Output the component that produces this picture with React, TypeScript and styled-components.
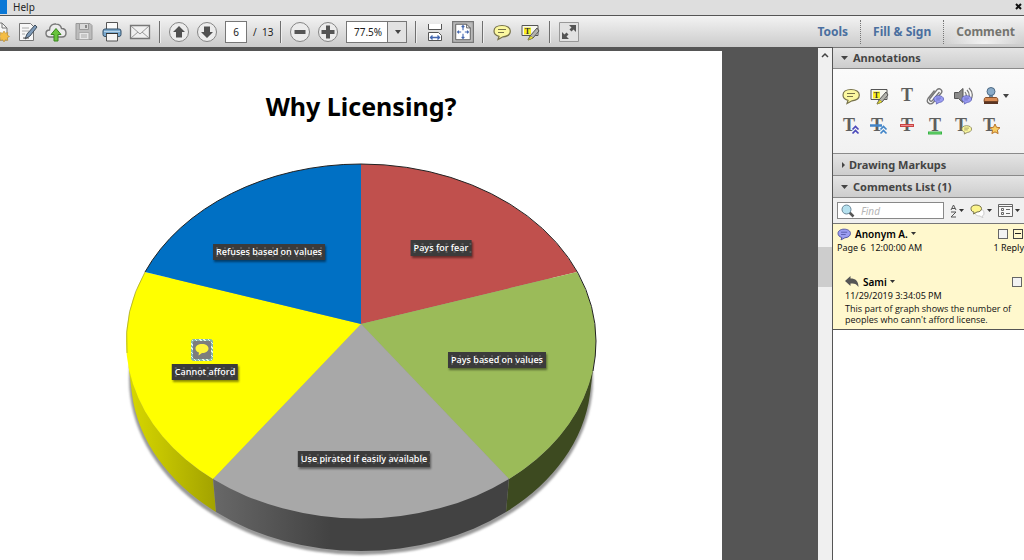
import React from "react";
import styled, { createGlobalStyle, css } from "styled-components";

const GlobalStyle = createGlobalStyle`
  * { box-sizing: border-box; }
  body { margin: 0; background: #fff; }
  body, button, input, select {
    font-family: "Noto Sans", "Open Sans", sans-serif;
    color: #222;
  }
  button { border: 0; background: none; padding: 0; margin: 0; }
  svg { display: block; flex: none; }
  h1, h2, p { margin: 0; }
`;

const Shell = styled.div`
  display: flex;
  flex-direction: column;
  min-height: 100vh;
  overflow: hidden;
`;

const MenuBar = styled.nav`
  display: flex;
  align-items: center;
  height: 16px;
  background: #dedede;
  border-bottom: 1px solid #555;
`;

const MenuHighlight = styled.span`
  align-self: stretch;
  width: 7px;
  margin-bottom: 1px;
  background: #0a78d6;
`;

const MenuItem = styled.button`
  margin-left: 6px;
  padding-bottom: 2px;
  font-size: 10px;
  line-height: 12px;
`;

const CloseButton = styled.button`
  margin-left: auto;
  padding: 0 2px 2px 0;
`;

const Toolbar = styled.header`
  display: flex;
  align-items: stretch;
  height: 31px;
  background: linear-gradient(#f3f3f3, #cbcbcb);
`;

const Tools = styled.div`
  display: flex;
  align-items: center;
  flex: 1;
  margin-left: -14px;
`;

const ToolButton = styled.button<{ $active?: boolean }>`
  display: flex;
  align-items: center;
  justify-content: center;
  width: 28px;
  height: 30px;
  ${(p) =>
    p.$active &&
    css`
      width: 22px;
      height: 22px;
      margin: 0 3px;
      background: #bdbdbd;
      border: 1px solid #777;
      box-shadow: inset 0 0 2px #777;
    `}
`;

const Divider = styled.span`
  width: 1px;
  height: 22px;
  margin: 0 5px;
  background: #6f6f6f;
  box-shadow: 1px 0 #eee;
`;

const PageField = styled.input`
  width: 22px;
  height: 22px;
  margin-left: 4px;
  padding: 0;
  border: 1px solid #777;
  background: #fff;
  font-size: 10px;
  text-align: center;
`;

const PageTotal = styled.span`
  width: 28px;
  padding-left: 6px;
  font-size: 10px;
  line-height: 16px;
  white-space: pre;
`;

const ZoomBox = styled.label`
  position: relative;
  width: 61px;
  height: 22px;
  margin: 0 3px 0 4px;
`;

const ZoomSelect = styled.select`
  display: block;
  appearance: none;
  width: 100%;
  height: 100%;
  padding: 0 0 0 7px;
  border: 1px solid #777;
  border-radius: 0;
  background: linear-gradient(90deg, #fff 40px, #777 40px, #777 41px, #e2e2e2 41px);
  font-size: 10px;
  line-height: 20px;
`;

const ZoomArrow = styled.svg`
  position: absolute;
  right: 6px;
  top: 9px;
  pointer-events: none;
`;

const TaskTabs = styled.div`
  display: flex;
  align-items: center;
`;

const TaskTab = styled.button<{ $active?: boolean }>`
  height: 24px;
  padding: 0 12px;
  font-size: 12px;
  font-weight: 700;
  line-height: 24px;
  color: ${(p) => (p.$active ? "#74746f" : "#4a6f9f")};
  background: ${(p) => (p.$active ? "radial-gradient(ellipse at 50% 100%, #f2f2f2, transparent 70%)" : "none")};
  & + & {
    border-left: 1px dotted #777;
  }
  &:last-child {
    padding-right: 9px;
  }
`;

const Workspace = styled.div`
  display: flex;
  flex: 1;
`;

const Viewer = styled.main`
  display: flex;
  flex: 1;
  min-width: 0;
  padding: 4px 96px 0 0;
  background: #555;
`;

const Page = styled.article`
  display: flex;
  flex: 1;
  min-width: 0;
  flex-direction: column;
  align-items: center;
  padding-top: 36px;
  background: #fff;
`;

const PageTitle = styled.h1`
  font-size: 25px;
  line-height: 38px;
  font-weight: 700;
  color: #000;
`;

const Chart = styled.figure`
  position: relative;
  width: 480px;
  height: 400px;
  margin: 33px 0 0;
`;

const SliceLabel = styled.span<{ $x: number; $y: number }>`
  position: absolute;
  left: ${(p) => p.$x}px;
  top: ${(p) => p.$y}px;
  transform: translate(-50%, -50%);
  padding: 0 3px;
  font-family: "Open Sans", "Noto Sans", sans-serif;
  font-size: 9px;
  font-weight: 600;
  line-height: 16px;
  white-space: nowrap;
  color: #fff;
  background: radial-gradient(#5a5a5a 1px, transparent 1px) 0 0 / 8px 8px, #3b3b3b;
  box-shadow: 1px 2px 2px rgba(0, 0, 0, 0.45);
`;

const NoteMarker = styled.button`
  position: absolute;
  left: 70px;
  top: 181px;
  display: flex;
  align-items: center;
  justify-content: center;
  width: 22px;
  height: 22px;
  border: 2px solid transparent;
  border-radius: 3px;
  background: linear-gradient(#7d7d7d, #7d7d7d) padding-box,
    repeating-linear-gradient(45deg, #e4f6e6 0 1px, #86b5b0 1px 3px) border-box;
`;

const ScrollTrack = styled.div`
  width: 15px;
  background: #f0f0f0;
  border-top: 1px solid #555;
  border-right: 1px solid #555;
  padding-top: 4px;
`;

const ScrollThumb = styled.div`
  height: 40px;
  margin-top: 188px;
  background: #cdcdcd;
`;

const Panel = styled.aside`
  display: flex;
  flex-direction: column;
  width: 191px;
  background: #fff;
`;

const SectionHeader = styled.button<{ $open?: boolean }>`
  display: flex;
  align-items: center;
  gap: ${(p) => (p.$open ? 5 : 2)}px;
  height: 22px;
  padding-left: ${(p) => (p.$open ? 8 : 7)}px;
  font-size: 11px;
  font-weight: 700;
  line-height: 20px;
  text-align: left;
  color: #444;
  background: linear-gradient(#e4e4e4, #cdcdcd);
  border-bottom: 1px solid #8a8a8a;
  &:first-child {
    border-top: 1px solid #777;
  }
`;

const AnnotationTools = styled.div`
  display: grid;
  grid-template-columns: repeat(6, 28px);
  grid-auto-rows: 30px;
  height: 85px;
  padding: 12px 0 0 4px;
  background: linear-gradient(#fbfbfb, #f1f1f1);
  border-bottom: 1px solid #8a8a8a;
`;

const StampButton = styled(ToolButton)`
  justify-content: flex-start;
  width: 40px;
  gap: 1px;
  padding-left: 3px;
`;

const FilterRow = styled.div`
  display: flex;
  align-items: center;
  gap: 6px;
  height: 26px;
  padding-left: 4px;
  background: #f0f0f0;
  border-bottom: 1px solid #777;
`;

const SearchBox = styled.label`
  display: flex;
  align-items: center;
  gap: 6px;
  width: 107px;
  height: 17px;
  padding-left: 3px;
  border: 1px solid #888;
  background: #fff;
`;

const SearchInput = styled.input`
  width: 70px;
  height: 15px;
  padding: 0;
  border: 0;
  background: none;
  font-size: 10px;
  &::placeholder {
    color: #b5b5b5;
    font-style: italic;
  }
`;

const FilterButton = styled.button`
  display: flex;
  align-items: center;
  gap: 2px;
`;

const Thread = styled.section`
  display: flex;
  flex-direction: column;
  height: 106px;
  padding-top: 2px;
  background: #fff8cd;
  border-bottom: 1px solid #555;
  font-size: 10px;
  line-height: 14px;
  color: #111;
`;

const ThreadRow = styled.div`
  display: flex;
  align-items: center;
  gap: 4px;
  height: 15px;
  padding: 0 1px 0 4px;
`;

const Author = styled.button`
  display: flex;
  align-items: center;
  gap: 3px;
  margin-right: auto;
  font-size: 10px;
  font-weight: 600;
  line-height: 14px;
  color: #000;
`;

const Check = styled.input`
  appearance: none;
  width: 10px;
  height: 10px;
  margin: 0 1px;
  border: 1px solid #666;
  background: #f3f3f3;
`;

const CollapseButton = styled.button`
  display: flex;
  align-items: center;
  justify-content: center;
  width: 10px;
  height: 10px;
  border: 1px solid #444;
`;

const Meta = styled.div`
  display: flex;
  justify-content: space-between;
  padding-left: 4px;
  font-size: 9px;
  white-space: pre;
`;

const Reply = styled.div`
  margin-top: 19px;
  padding-left: 8px;
`;

const ReplyText = styled.p`
  padding-left: 4px;
  font-family: "Open Sans", "Noto Sans", sans-serif;
  font-size: 9px;
  line-height: 11px;
`;

const Arrow = ({ right = false }: { right?: boolean }) => (
  <svg width="7" height="6" viewBox="0 0 7 6" fill="#444">
    {right ? <path d="M2 0l3 3-3 3z" /> : <path d="M0 1h7L3.500 5z" />}
  </svg>
);

const MiniArrow = () => (
  <svg width="5" height="4" viewBox="0 0 5 4" fill="#333">
    <path d="M0 0h5L2.500 3z" />
  </svg>
);

const Icon = ({ children, size = 22 }: { children: React.ReactNode; size?: number }) => (
  <svg width={size} height={size} viewBox="0 0 22 22" fill="none" aria-hidden="true">
    {children}
  </svg>
);

const Bubble = ({ fill = "#fbf8a0", stroke = "#77724a" }: { fill?: string; stroke?: string }) => (
  <>
    <path
      d="M11 4.500c-5 0-8 2.400-8 5.600 0 2.500 2 4.600 5 5.300L7 18.500l5-2.700c4.500-.3 7.300-2.700 7.300-5.700C19.300 6.900 16 4.500 11 4.500z"
      fill={fill}
      stroke={stroke}
      strokeWidth="1.200"
    />
    <path d="M7 8.500h8M7 11.500h6" stroke={stroke} />
  </>
);

const HighlightArt = () => (
  <>
    <path d="M3 4.500h16v10H3z" fill="#f6f6ee" stroke="#555" />
    <path d="M5 6.500h7v7H5z" fill="#fbf01c" />
    <text x="8.500" y="13" textAnchor="middle" fontFamily="Liberation Serif" fontSize="8" fontWeight="700" fill="#333">T</text>
    <path d="M18 7l-7 8-2 4 5-2 6-7z" fill="#b3b3ad" stroke="#555" />
    <path d="M12 15l2 2-5 2z" fill="#f8ee2b" stroke="#99933a" strokeWidth=".7" />
  </>
);

const LetterT = ({ x = 11 }: { x?: number }) => (
  <text x={x} y="16" textAnchor="middle" fontFamily="Liberation Serif" fontSize="18" fontWeight="700" fill="#5e5e5e">T</text>
);

const MiniBubble = ({ fill, stroke }: { fill: string; stroke: string }) => (
  <g transform="translate(8 8) scale(.6)">
    <Bubble fill={fill} stroke={stroke} />
  </g>
);

const Carets = ({ color }: { color: string }) => (
  <path d="M12.500 14.500l3-3 3 3M12.500 18.500l3-3 3 3" stroke={color} strokeWidth="1.700" />
);

const RoundArt = ({ children }: { children: React.ReactNode }) => (
  <>
    <circle cx="11" cy="11" r="9.500" fill="#ececec" stroke="#858585" />
    {children}
  </>
);

const slices = [
  { d: "M0-17V-177A235 177 0 0 1 216-69Z", fill: "#c0504d" },
  { d: "M0-17L216-69A235 177 0 0 1 148 138Z", fill: "#9bbb59" },
  { d: "M0-17L148 138A235 177 0 0 1-148 138Z", fill: "#a8a8a8" },
  { d: "M0-17L-148 138A235 177 0 0 1-216-69Z", fill: "#ffff00" },
  { d: "M0-17L-216-69A235 177 0 0 1 0-177Z", fill: "#0070c4" },
];

const sliceLabels = [
  { text: "Refuses based on values", x: 148, y: 94 },
  { text: "Pays for fear", x: 320, y: 90 },
  { text: "Pays based on values", x: 376, y: 202 },
  { text: "Use pirated if easily available", x: 243, y: 301 },
  { text: "Cannot afford", x: 84, y: 214 },
];

const PieChart = () => (
  <Chart>
    <svg width="480" height="400" viewBox="-240 -183 480 400" role="img" aria-label="Licensing attitudes">
      <defs>
        <filter id="soft" x="-10%" y="-10%" width="120%" height="120%">
          <feGaussianBlur stdDeviation="1.200" />
        </filter>
        <linearGradient id="olive" x1="0" x2="1">
          <stop offset="0" stopColor="#d8d800" />
          <stop offset=".4" stopColor="#c4c400" />
          <stop offset="1" stopColor="#a2a200" />
        </linearGradient>
        <linearGradient id="coal" x1="0" x2="1">
          <stop offset="0" stopColor="#686868" />
          <stop offset=".4" stopColor="#424242" />
          <stop offset="1" stopColor="#424242" />
        </linearGradient>
      </defs>
      <ellipse cx="0" cy="38" rx="232" ry="176" fill="#999" filter="url(#soft)" />
      <path d="M-234 12L-229 53A230 174 0 0 0-145 171L-148 138A235 177 0 0 1-234 12Z" fill="url(#olive)" />
      <path d="M-148 137L-145 171A230 174 0 0 0 145 171L148 137Z" fill="url(#coal)" />
      <path d="M234 12L229 53A230 174 0 0 1 145 171L148 138A235 177 0 0 0 234 12Z" fill="#3d4a20" />
      {slices.map((s) => (
        <path key={s.fill} d={s.d} fill={s.fill} />
      ))}
      <path d="M-216-69A235 177 0 0 1 0-177A235 177 0 0 1 235 0Q235 15 232 30" fill="none" stroke="#222" />
      <path d="M-216-69A235 177 0 0 0-234 12" fill="none" stroke="#99993a" strokeWidth=".7" />
    </svg>
    {sliceLabels.map((l) => (
      <SliceLabel key={l.text} $x={l.x} $y={l.y}>
        {l.text}
      </SliceLabel>
    ))}
    <NoteMarker aria-label="Comment note">
      <svg width="14" height="12" viewBox="0 0 14 12" fill="#fdf43c">
        <path d="M7 0C3 0 .5 2 .5 4.500.5 6.500 2 8 4 8.500L3.500 11.500 7 9c4 0 6.500-2 6.500-4.500S11 0 7 0z" />
      </svg>
    </NoteMarker>
  </Chart>
);

const MainTools = () => (
  <Tools>
    <ToolButton aria-label="Create">
      <Icon>
        <path d="M3 2h10l5 5v12H3z" fill="#f6f6f6" stroke="#777" />
        <path d="M13 2v5h5" stroke="#777" />
        <path d="M15 10l1.300 2.200 2.500-.6-.5 2.500 2.200 1.400-2.200 1.300.5 2.600-2.500-.6L15 21l-1.300-2.200-2.500.6.5-2.600-2.200-1.300 2.200-1.400-.5-2.500 2.500.6z" fill="#f4bd45" stroke="#b98a2e" strokeWidth=".6" />
      </Icon>
    </ToolButton>
    <ToolButton aria-label="Edit">
      <Icon>
        <path d="M2.500 2.500h11l3 3v14h-14z" fill="#f7f7f7" stroke="#777" />
        <path d="M5 7h7M5 10h7M5 13h3" stroke="#aaa" />
        <path d="M18 4l2 2-7 9-5 3 2-5z" fill="#7e9ab8" stroke="#3f4d5c" />
        <path d="M6 17h6" stroke="#555" />
      </Icon>
    </ToolButton>
    <ToolButton aria-label="Upload">
      <Icon>
        <path d="M5 16C2.500 16 1 14.500 1 12.500S2.500 9 4.500 9C4.500 5 7.500 2.500 11 3c3 .2 5 2 5.500 4.500C19.500 7.500 21 9.500 21 12s-1.500 4-4 4z" fill="#ececec" stroke="#777" strokeWidth="1.400" />
        <path d="M11 7.500l5 6h-3V20H9v-6.500H6z" fill="#69c43c" stroke="#38851f" />
      </Icon>
    </ToolButton>
    <ToolButton aria-label="Save">
      <Icon>
        <path d="M3 2.500h14l2 2v14H3z" fill="#bcbcbc" stroke="#999" />
        <path d="M6.500 2.500h9v6h-9z" fill="#d9d9d9" stroke="#999" />
        <path d="M13 4v3" stroke="#888" strokeWidth="2" />
        <path d="M6 11.500h10v7H6z" fill="#e5e5e5" stroke="#aaa" />
        <path d="M8 14h6M8 16h6" stroke="#aaa" />
      </Icon>
    </ToolButton>
    <ToolButton aria-label="Print">
      <Icon>
        <path d="M5.500 1.500h11V9h-11z" fill="#fafafa" stroke="#555" />
        <rect x="2" y="8" width="18" height="7.500" rx="2" fill="#7ba9ce" stroke="#355069" />
        <path d="M3 10.500h16" stroke="#b7d4ea" />
        <path d="M5.500 12.500h11v7.500h-11z" fill="#f4f4f4" stroke="#555" />
        <path d="M5 12.500h12" stroke="#333" />
      </Icon>
    </ToolButton>
    <ToolButton aria-label="Mail">
      <Icon>
        <path d="M1.500 4.500h19v13h-19z" fill="#f0f0f0" stroke="#777" strokeWidth="1.300" />
        <path d="M2 5l9 8 9-8M2 17l7-6M20 17l-7-6" stroke="#999" />
      </Icon>
    </ToolButton>
    <Divider />
    <ToolButton aria-label="Previous page">
      <Icon>
        <RoundArt>
          <path d="M11 5l6 6h-3v5.500H8V11H5z" fill="#505050" />
        </RoundArt>
      </Icon>
    </ToolButton>
    <ToolButton aria-label="Next page">
      <Icon>
        <RoundArt>
          <path d="M11 17l6-6h-3V5.500H8V11H5z" fill="#505050" />
        </RoundArt>
      </Icon>
    </ToolButton>
    <PageField aria-label="Page" defaultValue="6" />
    <PageTotal>{"/  13"}</PageTotal>
    <Divider />
    <ToolButton aria-label="Zoom out">
      <Icon>
        <RoundArt>
          <path d="M5.500 9h11v4h-11z" fill="#555" />
        </RoundArt>
      </Icon>
    </ToolButton>
    <ToolButton aria-label="Zoom in">
      <Icon>
        <RoundArt>
          <path d="M9 4.500h4V9h4.500v4H13v4.500H9V13H4.500V9H9z" fill="#555" />
        </RoundArt>
      </Icon>
    </ToolButton>
    <ZoomBox>
      <ZoomSelect aria-label="Zoom" defaultValue="77.5%">
        <option>77.5%</option>
        <option>100%</option>
      </ZoomSelect>
      <ZoomArrow width="6" height="4" viewBox="0 0 6 4" fill="#444">
        <path d="M0 0h6L3 4z" />
      </ZoomArrow>
    </ZoomBox>
    <Divider />
    <ToolButton aria-label="Fit width">
      <Icon>
        <path d="M4.500 3v5.500h13V3" fill="#fff" stroke="#555" />
        <path d="M4.500 19.500v-8h10l3 3v5z" fill="#fff" stroke="#555" />
        <path d="M6 16.500h10M8.500 14.500l-2 2 2 2M13.500 14.500l2 2-2 2" stroke="#4467b0" strokeWidth="1.300" />
      </Icon>
    </ToolButton>
    <ToolButton $active aria-label="Fit page">
      <Icon size={20}>
        <path d="M3 2.500h12l4 4v13H3z" fill="#fff" stroke="#555" />
        <path d="M15 2.500v4h4" stroke="#555" />
        <path d="M11 4v5M11 13v5M5 11h4M13 11h4M9.500 5.500L11 4l1.500 1.500M9.500 16.500L11 18l1.500-1.500M6.500 9.500L5 11l1.500 1.500M15.500 9.500L17 11l-1.500 1.500" stroke="#4467b0" strokeWidth="1.200" />
      </Icon>
    </ToolButton>
    <Divider />
    <ToolButton aria-label="Add comment">
      <Icon>
        <Bubble />
      </Icon>
    </ToolButton>
    <ToolButton aria-label="Highlight">
      <Icon>
        <HighlightArt />
      </Icon>
    </ToolButton>
    <Divider />
    <ToolButton aria-label="Full screen">
      <Icon>
        <path d="M1.500 1.500h19v19h-19z" fill="#e2e2e2" stroke="#999" />
        <path d="M18 4v7l-2.500-2.500-2 2-2-2 2-2L11 4zM4 18v-7l2.500 2.500 2-2 2 2-2 2L11 18z" fill="#555" />
      </Icon>
    </ToolButton>
  </Tools>
);

const Annotations = () => (
  <AnnotationTools>
    <ToolButton aria-label="Sticky note">
      <Icon>
        <Bubble />
      </Icon>
    </ToolButton>
    <ToolButton aria-label="Highlight text">
      <Icon>
        <HighlightArt />
      </Icon>
    </ToolButton>
    <ToolButton aria-label="Add text">
      <Icon>
        <LetterT />
      </Icon>
    </ToolButton>
    <ToolButton aria-label="Attach file">
      <Icon>
        <path d="M15.500 7l-7 8.500c-1.800 1.800-4-.2-2.500-2L13 4.800c2.500-2.500 6.300.4 4.300 3.200l-8 9.500C6.500 20.500 1.500 17.500 4 13.500l6.500-8" stroke="#777" strokeWidth="1.300" />
        <MiniBubble fill="#9b9df2" stroke="#5256b2" />
      </Icon>
    </ToolButton>
    <ToolButton aria-label="Record audio">
      <Icon>
        <path d="M2.500 7.500h4l4.500-4v14l-4.500-4h-4z" fill="#8a8a8a" stroke="#555" />
        <path d="M13 7c1.500 2 1.500 5 0 7M15 5c3 3 3 8 0 11M17 3c4 4 4 9 1 13" stroke="#777" strokeWidth="1.200" />
        <MiniBubble fill="#9b9df2" stroke="#5256b2" />
      </Icon>
    </ToolButton>
    <StampButton aria-label="Stamp">
      <Icon>
        <path d="M9 10h4v4H9z" fill="#6d8aa4" />
        <circle cx="11" cy="6.500" r="4" fill="#8aabc8" stroke="#4e6b85" />
        <path d="M5.500 12.500h11q1.500 0 1.500 4H4q0-4 1.500-4z" fill="#d98c55" stroke="#86502b" />
        <path d="M4 16.500h14v2.500H4z" fill="#5a3523" />
      </Icon>
      <svg width="6" height="4" viewBox="0 0 6 4" fill="#444">
        <path d="M0 0h6L3 4z" />
      </svg>
    </StampButton>
    <ToolButton aria-label="Insert text">
      <Icon>
        <LetterT x={9} />
        <Carets color="#4a48bb" />
      </Icon>
    </ToolButton>
    <ToolButton aria-label="Replace text">
      <Icon>
        <LetterT x={9} />
        <path d="M2 10.500h12" stroke="#4285c8" strokeWidth="2.500" />
        <Carets color="#4285c8" />
      </Icon>
    </ToolButton>
    <ToolButton aria-label="Strikethrough">
      <Icon>
        <LetterT />
        <path d="M4 10.500h14" stroke="#c94444" strokeWidth="3" />
        <path d="M5 10.500h12" stroke="#ee8c8c" />
      </Icon>
    </ToolButton>
    <ToolButton aria-label="Underline">
      <Icon>
        <LetterT />
        <path d="M4 18h14" stroke="#38b345" strokeWidth="3" />
        <path d="M5 18h12" stroke="#73dc78" />
      </Icon>
    </ToolButton>
    <ToolButton aria-label="Comment on text">
      <Icon>
        <LetterT x={9} />
        <MiniBubble fill="#fbf8a0" stroke="#77724a" />
      </Icon>
    </ToolButton>
    <ToolButton aria-label="Mark text">
      <Icon>
        <LetterT x={9} />
        <path d="M15 9l1.500 3.300 3.500.4-2.600 2.400.7 3.500L15 16.900l-3.100 1.700.7-3.500L10 12.700l3.500-.4z" fill="#f8cd62" stroke="#b9752a" />
      </Icon>
    </ToolButton>
  </AnnotationTools>
);

const CommentsPanel = () => (
  <Panel>
    <SectionHeader $open>
      <Arrow />
      Annotations
    </SectionHeader>
    <Annotations />
    <SectionHeader>
      <Arrow right />
      Drawing Markups
    </SectionHeader>
    <SectionHeader $open>
      <Arrow />
      Comments List (1)
    </SectionHeader>
    <FilterRow>
      <SearchBox>
        <svg width="14" height="14" viewBox="0 0 14 14" fill="none">
          <path d="M8.500 8.500l4 4" stroke="#555" strokeWidth="2.500" />
          <circle cx="5.500" cy="5.500" r="4.500" fill="#b5e1ef" stroke="#6b8798" />
        </svg>
        <SearchInput placeholder="Find" aria-label="Find" />
      </SearchBox>
      <FilterButton aria-label="Sort">
        <svg width="7" height="14" viewBox="0 0 7 14" fill="none" stroke="#555">
          <path d="M1 6l2.500-5L6 6M2 4.500h3M1 8h5l-5 5h5" />
        </svg>
        <MiniArrow />
      </FilterButton>
      <FilterButton aria-label="Filter">
        <svg width="15" height="14" viewBox="0 0 15 14" fill="none">
          <path d="M9 5c3 0 5 1 5 4 0 2-1 3-2 3l1 2-3-2c-4 0-5-2-5-3z" fill="#fff" stroke="#ccc" />
          <path d="M6 1C3 1 1 2.500 1 4.500S2 8 4 8l-.5 2L7 8c3 0 4.500-1.500 4.500-3.500S9 1 6 1z" fill="#fbf48c" stroke="#77724a" />
        </svg>
        <MiniArrow />
      </FilterButton>
      <FilterButton aria-label="Options">
        <svg width="15" height="13" viewBox="0 0 15 13" fill="none" stroke="#666">
          <path d="M.5.500h14v12H.5zM1 2.500h13" fill="#f8f8f8" />
          <path d="M3.500 4.500h2v2h-2zM3.500 8.500h2v2h-2zM8 5.500h4M8 9.500h4" />
        </svg>
        <MiniArrow />
      </FilterButton>
    </FilterRow>
    <Thread>
      <ThreadRow>
        <Icon size={14}>
          <g transform="translate(-2 -2) scale(1.200)">
            <Bubble fill="#9b9df2" stroke="#4a4f9c" />
          </g>
        </Icon>
        <Author>
          Anonym A.
          <MiniArrow />
        </Author>
        <Check type="checkbox" aria-label="Mark Anonym A. comment" />
        <CollapseButton aria-label="Collapse">
          <svg width="6" height="2" viewBox="0 0 6 2" fill="#222">
            <path d="M0 0h6v1H0z" />
          </svg>
        </CollapseButton>
      </ThreadRow>
      <Meta>
        <span>{"Page 6  12:00:00 AM"}</span>
        <span>1 Reply</span>
      </Meta>
      <Reply>
        <ThreadRow>
          <svg width="14" height="11" viewBox="0 0 14 11" fill="#555">
            <path d="M5.500 0v2.500c5 0 8 2.500 8 8.500-2-3-4-4-8-3.500V10L0 5z" />
          </svg>
          <Author>
            Sami
            <MiniArrow />
          </Author>
          <Check type="checkbox" aria-label="Mark Sami reply" />
        </ThreadRow>
        <Meta>11/29/2019 3:34:05 PM</Meta>
        <ReplyText>
          This part of graph shows the number of
          <br />
          peoples who cann't afford license.
        </ReplyText>
      </Reply>
    </Thread>
  </Panel>
);

export default function App() {
  return (
    <>
      <GlobalStyle />
      <Shell>
        <MenuBar>
          <MenuHighlight />
          <MenuItem>Help</MenuItem>
          <CloseButton aria-label="Close">
            <svg width="7" height="7" viewBox="0 0 7 7" stroke="#111" strokeWidth="2">
              <path d="M1 1l5 5M6 1L1 6" />
            </svg>
          </CloseButton>
        </MenuBar>
        <Toolbar>
          <MainTools />
          <TaskTabs>
            <TaskTab>Tools</TaskTab>
            <TaskTab>Fill &amp; Sign</TaskTab>
            <TaskTab $active>Comment</TaskTab>
          </TaskTabs>
        </Toolbar>
        <Workspace>
          <Viewer>
            <Page>
              <PageTitle>Why Licensing?</PageTitle>
              <PieChart />
            </Page>
          </Viewer>
          <ScrollTrack>
            <svg width="14" height="7" viewBox="0 0 14 7" fill="none" stroke="#444" strokeWidth="1.500">
              <path d="M4 5l3-3 3 3" />
            </svg>
            <ScrollThumb />
          </ScrollTrack>
          <CommentsPanel />
        </Workspace>
      </Shell>
    </>
  );
}
